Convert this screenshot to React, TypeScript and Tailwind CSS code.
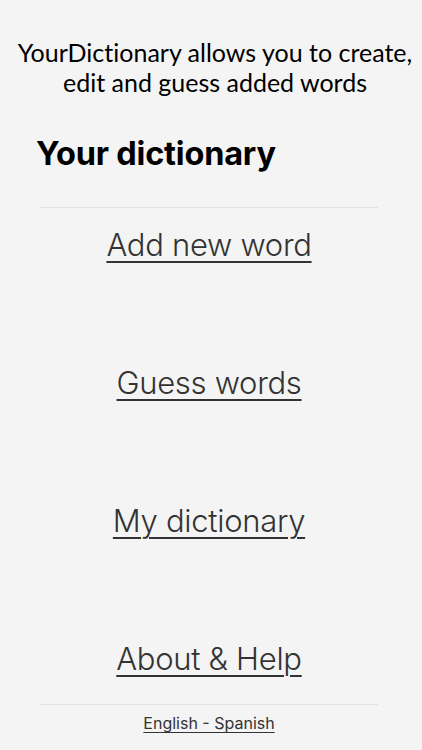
import React from 'react';

const menu = ['Add new word', 'Guess words', 'My dictionary', 'About & Help'];

export default function App() {
  return (
    <div className="flex h-[750px] w-[422px] flex-col overflow-hidden bg-[#f4f4f4]">
      <p
        className="pl-[8px] pt-[37px] text-center text-[25px] leading-[30px] text-black [font-variant-ligatures:none]"
        style={{ fontFamily: 'Lato, "Open Sans", sans-serif' }}
      >
        YourDictionary allows you to create,
        <br />
        edit and guess added words
      </p>

      <h1
        className="mt-[37px] pl-[36px] text-[32.5px] font-bold leading-[40px] tracking-[-0.2px] text-black"
        style={{ fontFamily: 'Inter, Roboto, sans-serif' }}
      >
        Your dictionary
      </h1>

      <div className="ml-[40px] mr-[44px] mt-[33px] flex flex-col border-t border-[#e2e2e4]">
        {menu.map((label) => (
          <div key={label} className="flex h-[138px] items-start justify-center pt-[17px]">
            <a
              href="#"
              className="text-[31px] font-light leading-[40px] tracking-[-0.3px] text-[#333] underline decoration-[2px] underline-offset-[5px]"
              style={{ fontFamily: 'Inter, Roboto, sans-serif' }}
            >
              {label}
            </a>
          </div>
        ))}
      </div>

      <div className="ml-[40px] mr-[44px] -mt-[56px] flex justify-center border-t border-[#e2e2e4] pt-[7px]">
        <a
          href="#"
          className="text-[16px] leading-[22px] text-[#333] underline underline-offset-[3px]"
          style={{ fontFamily: 'Inter, Roboto, sans-serif' }}
        >
          English - Spanish
        </a>
      </div>
    </div>
  );
}
